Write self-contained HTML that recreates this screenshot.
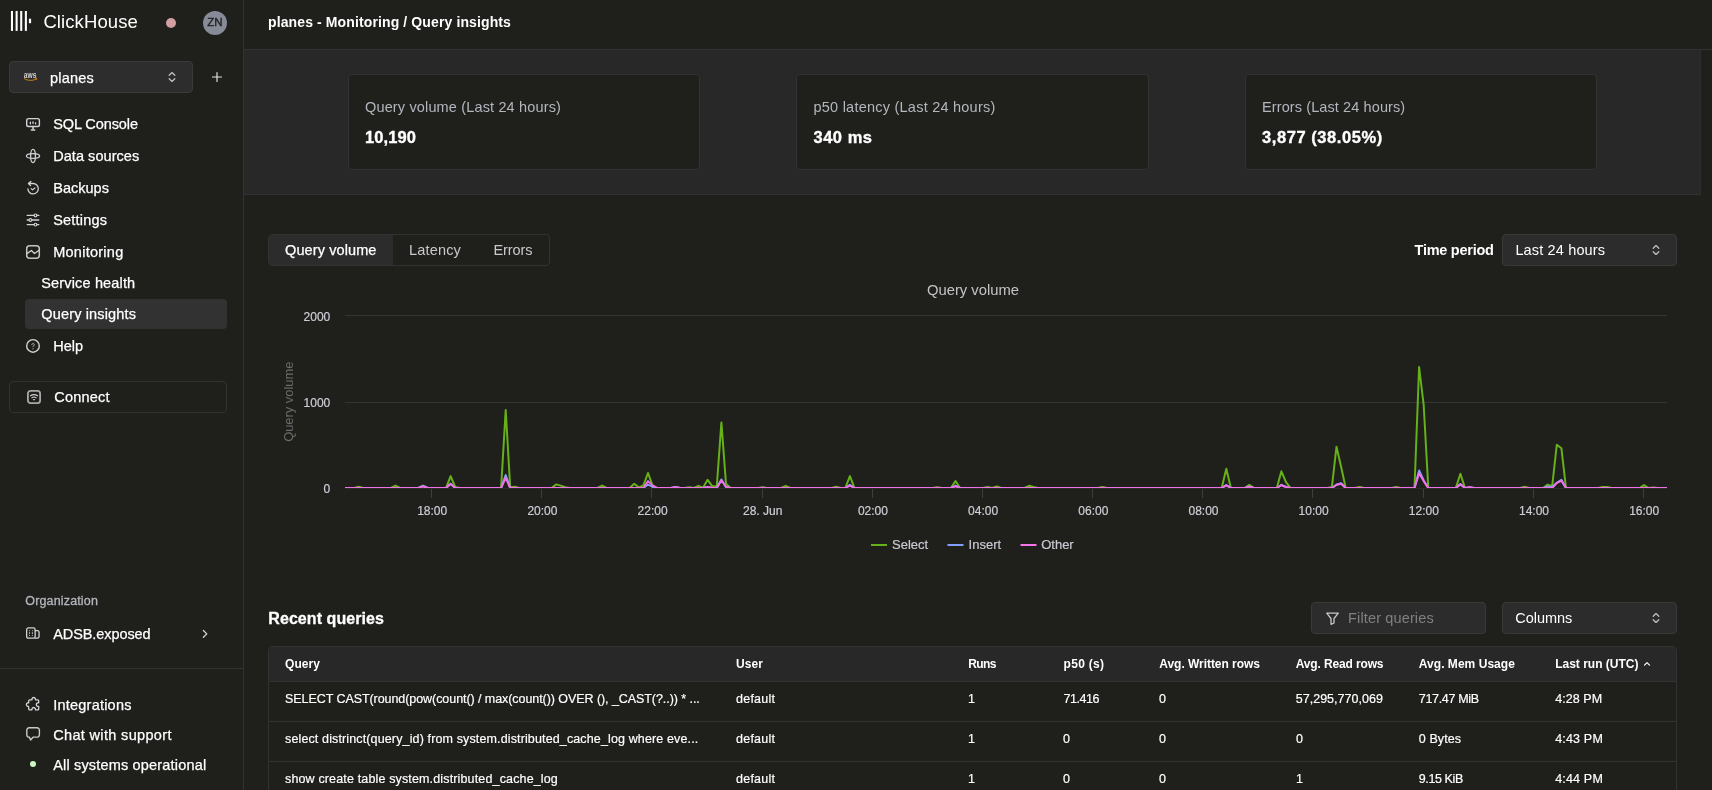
<!DOCTYPE html>
<html lang="en">
<head>
<meta charset="utf-8">
<title>planes - Monitoring / Query insights</title>
<style>
*{box-sizing:border-box;margin:0;padding:0}
html,body{width:1712px;height:790px;overflow:hidden;background:#1f1f1c}
body{font-family:"Liberation Sans",sans-serif;color:#fff;font-size:14px;position:relative;-webkit-font-smoothing:antialiased}
.abs{position:absolute}
.t{position:absolute;white-space:nowrap;line-height:20px;height:20px}
.b{font-weight:700}
.m{color:#b3b6bd}
#sidebar{position:absolute;left:0;top:0;width:244px;height:790px;border-right:1px solid #323232;background:#1f1f1c}
.nav{position:absolute;left:53px;font-size:14.5px;line-height:20px;height:20px;white-space:nowrap;color:#fff;-webkit-text-stroke:0.25px #fff}
.ico{position:absolute;left:25px;width:16px;height:16px}
.ico svg{display:block;width:16px;height:16px;fill:none;stroke:#d2d3d5;stroke-width:1.3;stroke-linecap:round;stroke-linejoin:round}
#header{position:absolute;left:244px;top:0;width:1468px;height:50px;border-bottom:1px solid #323232}
#band{position:absolute;left:244px;top:50px;width:1457px;height:145px;background:#282828;border-bottom:1px solid #323232;border-right:1px solid #2d2d2d}
.card{position:absolute;top:74px;width:352px;height:96px;background:#1f1f1c;border:1px solid #323232;border-radius:4px}
.sel{position:absolute;height:32px;background:#2c2c2c;border:1px solid #3a3a3a;border-radius:4px}
.chev{position:absolute;width:10px;height:14px}
.chev svg{display:block;width:10px;height:14px;fill:none;stroke:#c0c0c0;stroke-width:1.3;stroke-linecap:round;stroke-linejoin:round}
.th{position:absolute;top:654px;font-size:12px;font-weight:700;line-height:20px;white-space:nowrap}
.td{position:absolute;font-size:12.5px;line-height:20px;white-space:nowrap;-webkit-text-stroke:0.2px #fff}
</style>
</head>
<body>
<div id="root" style="position:absolute;left:0;top:0;width:1712px;height:790px;will-change:transform">

<!-- SIDEBAR -->
<div id="sidebar">
  <!-- logo -->
  <svg class="abs" style="left:10px;top:11px" width="22" height="20" viewBox="0 0 22 20">
    <rect x="0.95" y="0" width="2.05" height="19.9" fill="#fff"/>
    <rect x="5.6" y="0" width="2.05" height="19.9" fill="#fff"/>
    <rect x="10.2" y="0" width="2.05" height="19.9" fill="#fff"/>
    <rect x="14.85" y="0" width="2.05" height="19.9" fill="#fff"/>
    <rect x="18.9" y="7.7" width="2.2" height="4.5" fill="#fff"/>
  </svg>
  <div class="t" id="brand" style="left:43.4px;top:11px;font-size:18.5px;line-height:22px;height:22px;letter-spacing:0.1px">ClickHouse</div>
  <div class="abs" style="left:166px;top:18px;width:10px;height:10px;border-radius:50%;background:#d19f9f"></div>
  <div class="abs" style="left:203px;top:11px;width:24px;height:24px;border-radius:50%;background:#878a97;color:#1f1f1c;font-size:11.5px;line-height:23px;text-align:center;letter-spacing:0.2px;-webkit-text-stroke:0.35px #1f1f1c">ZN</div>

  <!-- service select -->
  <div class="sel" style="left:9px;top:61px;width:184px;background:#2d2d2d;border-color:#3a3a3a"></div>
  <svg class="abs" style="left:22px;top:70px" width="17" height="13" viewBox="22 70 17 13">
    <text x="23.8" y="77.9" font-family="Liberation Sans, sans-serif" font-size="8.4" font-weight="700" fill="#d4d4d4" textLength="12.6" lengthAdjust="spacingAndGlyphs">aws</text>
    <path d="M24.2 78.6 C27.5 80.9 33 80.9 36.2 79" fill="none" stroke="#dd8b10" stroke-width="0.9" stroke-linecap="round"/>
    <path d="M35.2 78.2 L36.9 78.1 L36.4 79.7" fill="none" stroke="#dd8b10" stroke-width="0.7" stroke-linecap="round" stroke-linejoin="round"/>
  </svg>
  <div class="t" style="left:50.0px;top:68px;font-size:14.5px;-webkit-text-stroke:0.25px #fff;letter-spacing:0.211px">planes</div>
  <div class="chev" style="left:167px;top:70px"><svg viewBox="0 0 10 14"><path d="M2.2 5.2 L5 2.6 L7.8 5.2"/><path d="M2.2 8.8 L5 11.4 L7.8 8.8"/></svg></div>
  <svg class="abs" style="left:211px;top:71px" width="12" height="12" viewBox="0 0 12 12"><path d="M6 1.5V10.5M1.5 6H10.5" stroke="#e6e6e6" stroke-width="1.15" fill="none" stroke-linecap="round"/></svg>

  <!-- nav -->
  <div class="ico" style="top:116px"><svg viewBox="0 0 16 16"><rect x="1.7" y="2.6" width="12.7" height="7.9" rx="1.8" stroke-width="1.4"/><path d="M8.05 10.6v2.4" stroke-width="1.6"/><path d="M6.4 14h3.3" stroke-width="1.6"/><path d="M5.4 6.1v1.7M10.6 7v.8" stroke-width="1.3"/><path d="M8.05 5.4v2.4" stroke-width="1.8" stroke="#b0b0b0" stroke-linecap="butt"/></svg></div>
  <div class="nav" style="left:53.2px;top:114px;letter-spacing:-0.093px">SQL Console</div>

  <div class="ico" style="top:148px"><svg viewBox="0 0 16 16"><ellipse cx="8" cy="8" rx="2.4" ry="6.6" stroke-width="1.3"/><ellipse cx="8" cy="8" rx="6.6" ry="2.4" stroke-width="1.3"/></svg></div>
  <div class="nav" style="left:53.2px;top:146px;letter-spacing:0.055px">Data sources</div>

  <div class="ico" style="top:180px"><svg viewBox="0 0 16 16"><path d="M3.6 3.5H8.1A5.2 5.2 0 1 1 2.9 8.8" stroke-width="1.3"/><path d="M5.8 1.4L3.5 3.5l2 2" stroke-width="1.3"/><path d="M6.2 8.6l1.4 1.3 2.3-1.9" stroke-width="1.2"/></svg></div>
  <div class="nav" style="left:53.2px;top:178px;letter-spacing:0.025px">Backups</div>

  <div class="ico" style="top:212px"><svg viewBox="0 0 16 16"><path d="M2.2 3.45h6.8M12 3.45h1.8M2.2 8h1.8M7 8h6.8M2.2 12.6h6.8M12 12.6h1.8" stroke-width="1.3"/><circle cx="10.5" cy="3.45" r="1.4" stroke-width="1.1"/><circle cx="5.45" cy="8" r="1.4" stroke-width="1.1"/><circle cx="10.5" cy="12.6" r="1.4" stroke-width="1.1"/></svg></div>
  <div class="nav" style="left:53.2px;top:210px;letter-spacing:0.212px">Settings</div>

  <div class="ico" style="top:244px"><svg viewBox="0 0 16 16"><rect x="1.7" y="1.75" width="12.6" height="12.5" rx="3" stroke-width="1.5" stroke="#c4c4c4"/><path d="M1.9 9.6l4.5-3.1 3.1 3 4.6-3.2" stroke-width="1.3"/></svg></div>
  <div class="nav" style="left:53.2px;top:242px;letter-spacing:0.260px">Monitoring</div>

  <div class="nav" style="left:41.3px;top:273px;letter-spacing:0.151px">Service health</div>
  <div class="abs" style="left:25px;top:299px;width:202px;height:30px;background:#323232;border-radius:4px"></div>
  <div class="nav" style="left:41.3px;top:304px;letter-spacing:0.151px">Query insights</div>

  <div class="ico" style="top:338px"><svg viewBox="0 0 16 16"><circle cx="8" cy="7.9" r="6.3" stroke-width="1.4"/><path d="M6.8 6.7a1.25 1.25 0 1 1 1.9 1.1c-.45.25-.7.45-.7.9" stroke-width="1" stroke="#b4b4b4"/><path d="M8 10.7v.1" stroke-width="1.3" stroke="#999"/></svg></div>
  <div class="nav" style="left:53.2px;top:336px;letter-spacing:-0.007px">Help</div>

  <!-- connect -->
  <div class="abs" style="left:9px;top:381px;width:218px;height:32px;border:1px solid #323232;border-radius:4px"></div>
  <div class="ico" style="left:26px;top:389px"><svg viewBox="0 0 16 16"><rect x="1.9" y="1.9" width="12.2" height="12.2" rx="2.6" stroke-width="1.8" stroke="#a9a9a9"/><path d="M4.4 6.7c2.2-1.3 5-1.3 7.2 0" stroke-width="1.1"/><path d="M5.9 8.7c1.3-.8 2.9-.8 4.2 0" stroke-width="1.1"/><path d="M7.4 10.6h1.2" stroke-width="1.1" stroke="#bbb"/></svg></div>
  <div class="nav" style="left:54.3px;top:387px;letter-spacing:0.212px">Connect</div>

  <!-- organisation -->
  <div class="t m" style="left:25.3px;top:591px;font-size:12.5px;-webkit-text-stroke:0.3px #b3b6bd;letter-spacing:0.152px">Organization</div>
  <div class="ico" style="top:626px"><svg viewBox="0 0 16 16"><rect x="1.65" y="1.9" width="8.5" height="10.3" rx="1.8" stroke-width="1.3"/><path d="M10.15 4.7h2.3a1.6 1.6 0 0 1 1.6 1.6v4.3a1.6 1.6 0 0 1-1.6 1.6h-2.3" stroke-width="1.3"/><path d="M4.5 4.6v.2M7.4 4.6v.2M4.5 6.6v.9M7.4 6.6v.9M4.5 9.3v.2M7.4 9.3v.2" stroke-width="1.1" stroke="#aaa"/></svg></div>
  <div class="nav" style="left:53.2px;top:624px;letter-spacing:-0.079px">ADSB.exposed</div>
  <svg class="abs" style="left:201px;top:628px" width="8" height="12" viewBox="0 0 8 12"><path d="M2.4 2.5l3.4 3.4-3.4 3.4" fill="none" stroke="#d8d8d8" stroke-width="1.3" stroke-linecap="round" stroke-linejoin="round"/></svg>

  <div class="abs" style="left:0;top:668px;width:243px;height:1px;background:#323232"></div>

  <div class="ico" style="top:696px"><svg viewBox="0 0 16 16"><path d="M4.9 3.9H6.9C6.9 3.9 6.6 1.5 8.7 1.5C10.8 1.5 10.5 3.9 10.5 3.9H12.7a1 1 0 0 1 1 1V6.8C13.7 6.8 11.3 6.5 11.3 8.6C11.3 10.7 13.7 10.4 13.7 10.4V12.9a1 1 0 0 1-1 1H10.5C10.5 13.9 10.8 11.5 8.7 11.5C6.6 11.5 6.9 13.9 6.9 13.9H4.7a1 1 0 0 1-1-1V10.4C3.7 10.4 1.4 10.7 1.4 8.6C1.4 6.5 3.7 6.8 3.7 6.8V4.9a1 1 0 0 1 1-1z" stroke-width="1.3"/></svg></div>
  <div class="nav" style="left:53.2px;top:695px;letter-spacing:0.227px">Integrations</div>

  <div class="ico" style="top:726px"><svg viewBox="0 0 16 16"><path d="M4.2 1.7h7.8a2.4 2.4 0 0 1 2.4 2.4v4.6a2.4 2.4 0 0 1-2.4 2.4H8.3L5.6 13.9 4.4 11.1H4.2a2.4 2.4 0 0 1-2.4-2.4V4.1a2.4 2.4 0 0 1 2.4-2.4z" stroke-width="1.4" stroke="#c8c8c8"/></svg></div>
  <div class="nav" style="left:53.2px;top:725px;letter-spacing:0.339px">Chat with support</div>

  <div class="abs" style="left:30px;top:761px;width:6px;height:6px;border-radius:50%;background:#cdf5c4"></div>
  <div class="nav" style="left:53.2px;top:755px;letter-spacing:0.174px">All systems operational</div>
</div>

<!-- HEADER -->
<div id="header"></div>
<div class="t b" style="left:268.0px;top:12px;font-size:14px;letter-spacing:0.117px">planes - Monitoring / Query insights</div>

<!-- SUMMARY BAND -->
<div id="band"></div>
<div class="card" style="left:348px"></div>
<div class="card" style="left:796px;width:353px"></div>
<div class="card" style="left:1245px"></div>
<div class="t m" style="left:365.0px;top:97px;font-size:14.5px;letter-spacing:0.150px">Query volume (Last 24 hours)</div>
<div class="t b" style="left:365.0px;top:127px;font-size:16.5px;-webkit-text-stroke:0.35px #fff;letter-spacing:0.089px">10,190</div>
<div class="t m" style="left:813.5px;top:97px;font-size:14.5px;letter-spacing:0.233px">p50 latency (Last 24 hours)</div>
<div class="t b" style="left:813.5px;top:127px;font-size:16.5px;-webkit-text-stroke:0.35px #fff;letter-spacing:0.505px">340 ms</div>
<div class="t m" style="left:1262.0px;top:97px;font-size:14.5px;letter-spacing:0.103px">Errors (Last 24 hours)</div>
<div class="t b" style="left:1262.0px;top:127px;font-size:16.5px;-webkit-text-stroke:0.35px #fff;letter-spacing:0.569px">3,877 (38.05%)</div>

<!-- TABS -->
<div class="abs" style="left:268px;top:234px;width:282px;height:32px;border:1px solid #323232;border-radius:4px;overflow:hidden"><div style="width:124px;height:30px;background:#2c2c2c"></div></div>
<div class="t" style="left:285.0px;top:240px;font-size:14.5px;-webkit-text-stroke:0.25px #fff;letter-spacing:0.103px">Query volume</div>
<div class="t" style="left:409.0px;top:240px;font-size:14.5px;color:#c8c9cd;letter-spacing:0.172px">Latency</div>
<div class="t" style="left:493.5px;top:240px;font-size:14.5px;color:#c8c9cd;letter-spacing:-0.081px">Errors</div>

<div class="t b" style="left:1414.6px;top:240px;font-size:14.5px;letter-spacing:-0.266px">Time period</div>
<div class="sel" style="left:1502px;top:234px;width:175px"></div>
<div class="t" style="left:1515.4px;top:240px;font-size:14.5px;letter-spacing:0.148px">Last 24 hours</div>
<div class="chev" style="left:1651px;top:243px"><svg viewBox="0 0 10 14"><path d="M2.2 5.2 L5 2.6 L7.8 5.2"/><path d="M2.2 8.8 L5 11.4 L7.8 8.8"/></svg></div>

<!-- CHART -->
<svg class="abs" id="chart" style="left:268px;top:274px" width="1412" height="290" viewBox="268 274 1412 290" font-family="Liberation Sans, sans-serif">
  <text x="973" y="295" font-size="14.8" fill="#c4c4c6" text-anchor="middle">Query volume</text>
  <rect x="345" y="315" width="1322" height="1" fill="#343436"/>
  <rect x="345" y="402" width="1322" height="1" fill="#343436"/>
  <g font-size="12" fill="#cdced6" stroke="#cdced6" stroke-width="0.2" text-anchor="end">
    <text x="330.3" y="320.8">2000</text><text x="330.3" y="407.3">1000</text><text x="330.3" y="493">0</text>
  </g>
  <text transform="translate(292.8,401.7) rotate(-90)" font-size="12.9" fill="#6c6c6e" text-anchor="middle">Query volume</text>
  <!--CS-->
  <clipPath id="pc"><rect x="345" y="300" width="1322" height="188"/></clipPath>
  <g clip-path="url(#pc)" fill="none" stroke-width="2" stroke-linejoin="round" stroke-linecap="round">
  <path stroke="#66b018" d="M345.0 488.0 L354.2 488.0 L358.8 486.8 L363.4 488.0 L390.9 488.0 L395.5 485.6 L400.1 488.0 L418.4 488.0 L423.0 485.6 L427.6 488.0 L446.0 488.0 L450.6 476.1 L455.2 487.0 L459.8 488.0 L501.1 488.0 L505.7 410.0 L510.2 487.2 L514.8 486.8 L519.4 488.0 L551.6 488.0 L556.2 484.4 L560.7 485.6 L565.3 487.2 L569.9 488.0 L597.5 488.0 L602.1 485.6 L606.6 488.0 L629.6 488.0 L634.2 483.8 L638.8 487.4 L643.4 485.4 L648.0 473.0 L652.5 485.4 L657.1 488.0 L670.9 488.0 L675.5 487.7 L680.1 488.0 L684.7 488.0 L689.3 487.2 L693.9 488.0 L698.5 485.8 L703.0 487.7 L707.6 479.8 L712.2 486.2 L716.8 486.2 L721.4 422.4 L726.0 483.7 L730.6 488.0 L758.1 488.0 L762.7 487.2 L767.3 488.0 L781.1 488.0 L785.7 485.8 L790.3 488.0 L831.6 488.0 L836.2 486.8 L840.8 488.0 L845.3 488.0 L849.9 476.1 L854.5 488.0 L932.6 488.0 L937.1 487.2 L941.7 488.0 L950.9 488.0 L955.5 481.0 L960.1 488.0 L983.0 488.0 L987.6 487.1 L992.2 488.0 L996.8 486.4 L1001.4 488.0 L1024.4 488.0 L1029.0 485.8 L1033.5 487.0 L1038.1 488.0 L1097.8 488.0 L1102.4 487.0 L1107.0 488.0 L1221.7 488.0 L1226.3 468.8 L1230.9 488.0 L1244.7 488.0 L1249.3 484.9 L1253.9 488.0 L1276.8 488.0 L1281.4 471.3 L1286.0 482.2 L1290.6 488.0 L1327.3 488.0 L1331.9 487.0 L1336.5 446.7 L1341.1 466.7 L1345.7 488.0 L1354.9 488.0 L1359.5 487.0 L1364.0 488.0 L1391.6 488.0 L1396.2 487.0 L1400.8 488.0 L1414.5 488.0 L1419.1 367.0 L1423.7 405.2 L1428.3 488.0 L1455.8 488.0 L1460.4 473.8 L1465.0 488.0 L1520.1 488.0 L1524.7 486.8 L1529.3 488.0 L1543.1 488.0 L1547.7 484.6 L1552.2 486.0 L1556.8 444.7 L1561.4 448.2 L1566.0 488.0 L1598.1 488.0 L1602.7 487.1 L1607.3 487.1 L1611.9 488.0 L1639.5 488.0 L1644.0 485.1 L1648.6 488.0 L1653.2 487.5 L1657.8 488.0 L1667.0 488.0"/>
  <path stroke="#82a0fa" d="M345.0 488.0 L418.4 488.0 L423.0 485.8 L427.6 488.0 L446.0 488.0 L450.6 483.6 L455.2 488.0 L501.1 488.0 L505.7 475.1 L510.2 488.0 L643.4 488.0 L648.0 484.5 L652.5 487.0 L657.1 488.0 L670.9 488.0 L675.5 487.0 L680.1 488.0 L703.0 488.0 L707.6 487.0 L712.2 488.0 L716.8 488.0 L721.4 479.5 L726.0 487.0 L730.6 488.0 L845.3 488.0 L849.9 484.7 L854.5 488.0 L950.9 488.0 L955.5 485.7 L960.1 488.0 L1221.7 488.0 L1226.3 485.0 L1230.9 488.0 L1244.7 488.0 L1249.3 486.8 L1253.9 488.0 L1276.8 488.0 L1281.4 484.8 L1286.0 487.0 L1290.6 488.0 L1331.9 488.0 L1336.5 484.8 L1341.1 483.2 L1345.7 488.0 L1414.5 488.0 L1419.1 470.5 L1423.7 480.5 L1428.3 488.0 L1455.8 488.0 L1460.4 484.0 L1465.0 488.0 L1469.6 487.2 L1474.2 488.0 L1543.1 488.0 L1547.7 486.8 L1552.2 487.0 L1556.8 482.8 L1561.4 479.8 L1566.0 488.0 L1667.0 488.0"/>
  <path stroke="#f070e6" d="M345.0 488.0 L418.4 488.0 L423.0 486.5 L427.6 488.0 L446.0 488.0 L450.6 484.0 L455.2 488.0 L501.1 488.0 L505.7 477.8 L510.2 488.0 L643.4 488.0 L648.0 481.1 L652.5 485.4 L657.1 488.0 L670.9 488.0 L675.5 487.0 L680.1 488.0 L703.0 488.0 L707.6 487.0 L712.2 488.0 L716.8 488.0 L721.4 480.2 L726.0 487.0 L730.6 488.0 L845.3 488.0 L849.9 485.7 L854.5 488.0 L950.9 488.0 L955.5 486.3 L960.1 488.0 L1221.7 488.0 L1226.3 485.4 L1230.9 488.0 L1244.7 488.0 L1249.3 486.8 L1253.9 488.0 L1276.8 488.0 L1281.4 485.2 L1286.0 487.0 L1290.6 488.0 L1331.9 488.0 L1336.5 484.7 L1341.1 483.8 L1345.7 488.0 L1414.5 488.0 L1419.1 473.5 L1423.7 481.1 L1428.3 488.0 L1455.8 488.0 L1460.4 484.4 L1465.0 488.0 L1469.6 487.2 L1474.2 488.0 L1552.2 488.0 L1556.8 482.8 L1561.4 480.8 L1566.0 488.0 L1667.0 488.0"/>
  </g>
  <rect x="345" y="488" width="1322" height="1" fill="#2b2d2b"/>
  <g fill="#3e3e40"><rect x="431" y="489" width="1" height="9"/><rect x="541" y="489" width="1" height="9"/><rect x="651" y="489" width="1" height="9"/><rect x="762" y="489" width="1" height="9"/><rect x="872" y="489" width="1" height="9"/><rect x="982" y="489" width="1" height="9"/><rect x="1092" y="489" width="1" height="9"/><rect x="1202" y="489" width="1" height="9"/><rect x="1312" y="489" width="1" height="9"/><rect x="1423" y="489" width="1" height="9"/><rect x="1533" y="489" width="1" height="9"/><rect x="1643" y="489" width="1" height="9"/></g>
  <g font-size="12" fill="#cdced6" stroke="#cdced6" stroke-width="0.2" text-anchor="middle"><text x="432.2" y="515.4">18:00</text><text x="542.4" y="515.4">20:00</text><text x="652.6" y="515.4">22:00</text><text x="762.7" y="515.4">28. Jun</text><text x="872.9" y="515.4">02:00</text><text x="983.1" y="515.4">04:00</text><text x="1093.3" y="515.4">06:00</text><text x="1203.5" y="515.4">08:00</text><text x="1313.6" y="515.4">10:00</text><text x="1423.8" y="515.4">12:00</text><text x="1534.0" y="515.4">14:00</text><text x="1644.2" y="515.4">16:00</text></g>
  <g><rect x="871" y="544" width="16" height="2" fill="#66b018"/><rect x="947.5" y="544" width="16" height="2" fill="#82a0fa"/><rect x="1020.5" y="544" width="16" height="2" fill="#f573eb"/></g>
  <g font-size="13" fill="#c8c9d2" stroke="#c8c9d2" stroke-width="0.2"><text x="892" y="549">Select</text><text x="968.6" y="549">Insert</text><text x="1041.2" y="549">Other</text></g>
  <!--CE-->
</svg>

<!-- RECENT QUERIES -->
<div class="t b" style="left:268.3px;top:609px;font-size:16px;-webkit-text-stroke:0.3px #fff;letter-spacing:0.070px">Recent queries</div>
<div class="sel" style="left:1311px;top:602px;width:175px"></div>
<svg class="abs" style="left:1324.6px;top:610.6px" width="15" height="15" viewBox="0 0 14 14"><path d="M1.6 2h10.8L8.4 7v4.2L5.6 12.4V7z" fill="none" stroke="#c8c9cd" stroke-width="1.2" stroke-linejoin="round"/></svg>
<div class="t" style="left:1348.1px;top:608px;font-size:14.5px;color:#808080;letter-spacing:0.135px">Filter queries</div>
<div class="sel" style="left:1502px;top:602px;width:175px"></div>
<div class="t" style="left:1515.3px;top:608px;font-size:14.5px;letter-spacing:-0.031px">Columns</div>
<div class="chev" style="left:1651px;top:611px"><svg viewBox="0 0 10 14"><path d="M2.2 5.2 L5 2.6 L7.8 5.2"/><path d="M2.2 8.8 L5 11.4 L7.8 8.8"/></svg></div>

<div class="abs" id="table" style="left:268px;top:646px;width:1409px;height:160px;border:1px solid #323232;border-radius:4px 4px 0 0;overflow:hidden">
  <div style="height:35px;background:#282828;border-bottom:1px solid #323232"></div>
  <div style="height:40px;border-bottom:1px solid #323232"></div>
  <div style="height:40px;border-bottom:1px solid #323232"></div>
</div>
<div class="th" style="left:285.0px;letter-spacing:0.062px">Query</div>
<div class="th" style="left:736.0px;letter-spacing:0.053px">User</div>
<div class="th" style="left:968.2px;letter-spacing:-0.550px">Runs</div>
<div class="th" style="left:1063.6px;letter-spacing:0.302px">p50 (s)</div>
<div class="th" style="left:1159.3px;letter-spacing:-0.044px">Avg. Written rows</div>
<div class="th" style="left:1295.7px;letter-spacing:-0.134px">Avg. Read rows</div>
<div class="th" style="left:1418.8px;letter-spacing:0.036px">Avg. Mem Usage</div>
<div class="th" style="left:1555.2px;letter-spacing:-0.009px">Last run (UTC)</div>
<svg class="abs" style="left:1643px;top:660px" width="8" height="8" viewBox="0 0 8 8"><path d="M1.5 5.2L4 2.7l2.5 2.5" fill="none" stroke="#fff" stroke-width="1.2" stroke-linecap="round" stroke-linejoin="round"/></svg>

<div class="td" style="left:285.0px;top:689px;letter-spacing:-0.065px">SELECT CAST(round(pow(count() / max(count()) OVER (), _CAST(?..)) * ...</div>
<div class="td" style="left:736.0px;top:689px;letter-spacing:0.238px">default</div>
<div class="td" style="left:968px;top:689px">1</div>
<div class="td" style="left:1063.6px;top:689px;letter-spacing:-0.472px">71.416</div>
<div class="td" style="left:1159px;top:689px">0</div>
<div class="td" style="left:1295.7px;top:689px;letter-spacing:0.029px">57,295,770,069</div>
<div class="td" style="left:1418.8px;top:689px;letter-spacing:-0.333px">717.47 MiB</div>
<div class="td" style="left:1555.2px;top:689px;letter-spacing:0.062px">4:28 PM</div>

<div class="td" style="left:285.0px;top:729px;letter-spacing:0.133px">select distrinct(query_id) from system.distributed_cache_log where eve...</div>
<div class="td" style="left:736.0px;top:729px;letter-spacing:0.238px">default</div>
<div class="td" style="left:968px;top:729px">1</div>
<div class="td" style="left:1063px;top:729px">0</div>
<div class="td" style="left:1159px;top:729px">0</div>
<div class="td" style="left:1296px;top:729px">0</div>
<div class="td" style="left:1418.8px;top:729px;letter-spacing:0.102px">0 Bytes</div>
<div class="td" style="left:1555.2px;top:729px;letter-spacing:0.177px">4:43 PM</div>

<div class="td" style="left:285.0px;top:769px;letter-spacing:0.149px">show create table system.distributed_cache_log</div>
<div class="td" style="left:736.0px;top:769px;letter-spacing:0.238px">default</div>
<div class="td" style="left:968px;top:769px">1</div>
<div class="td" style="left:1063px;top:769px">0</div>
<div class="td" style="left:1159px;top:769px">0</div>
<div class="td" style="left:1296px;top:769px">1</div>
<div class="td" style="left:1418.8px;top:769px;letter-spacing:-0.396px">9.15 KiB</div>
<div class="td" style="left:1555.2px;top:769px;letter-spacing:0.177px">4:44 PM</div>

</div>
</body>
</html>
